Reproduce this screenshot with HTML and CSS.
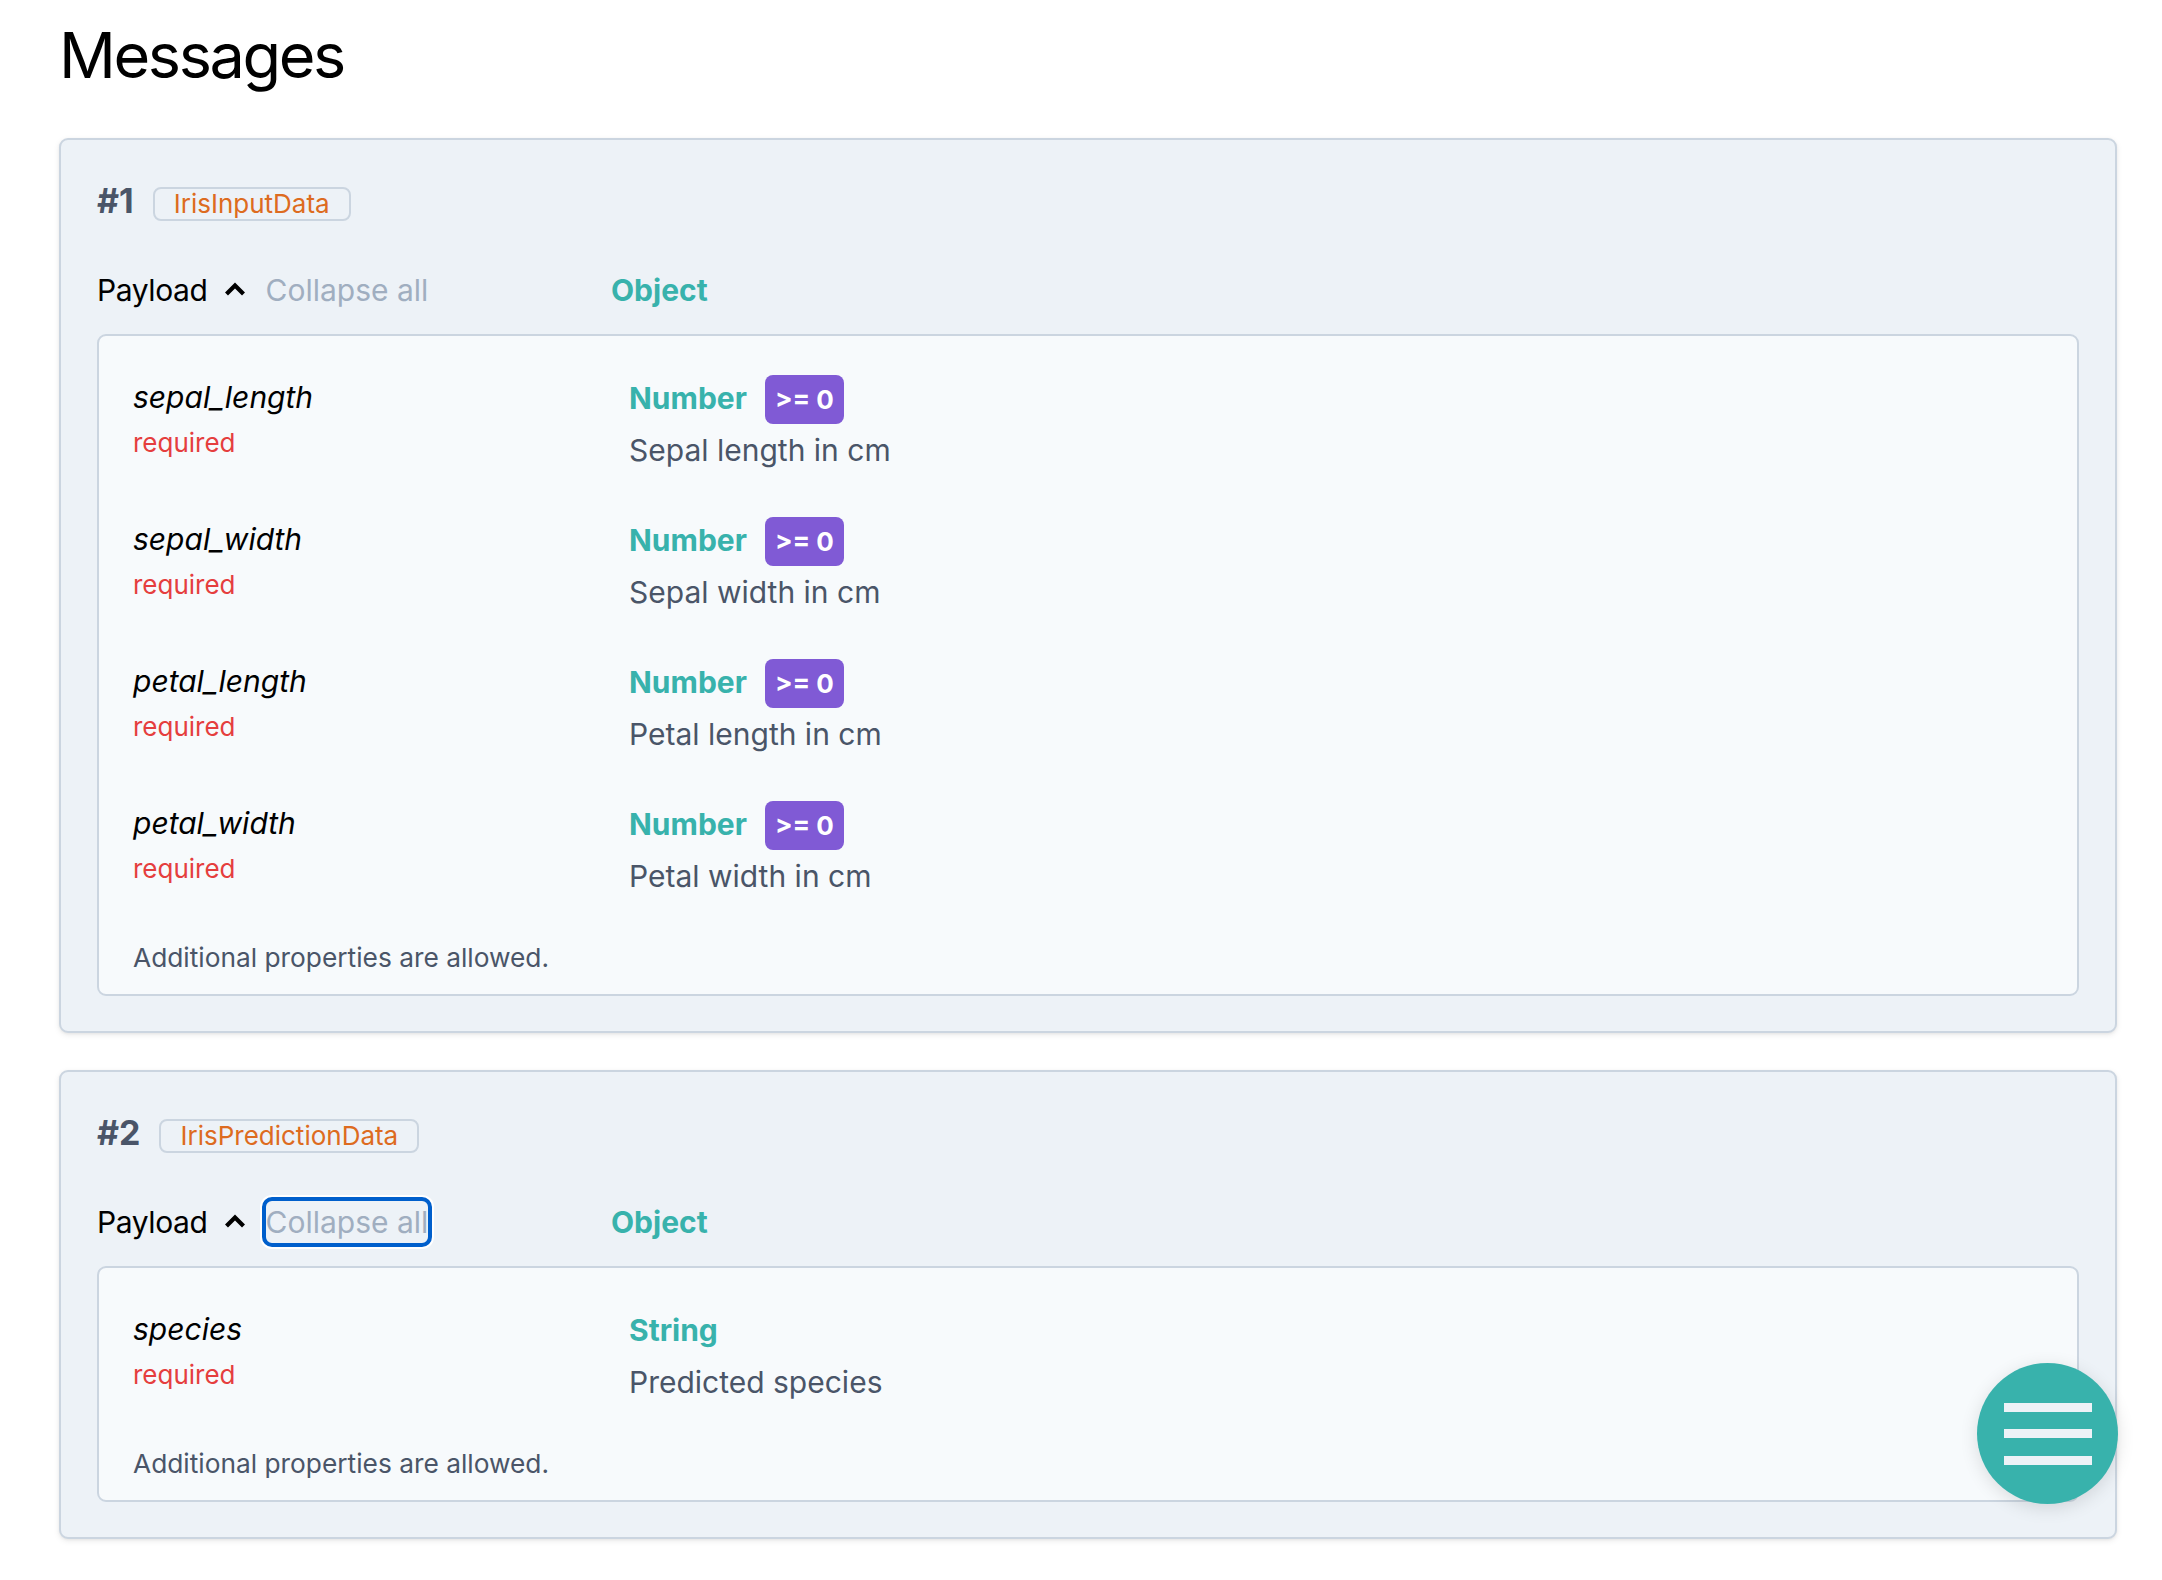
FILE: index.html
```html
<!DOCTYPE html>
<html lang="en">
<head>
<meta charset="utf-8">
<title>Messages</title>
<link rel="stylesheet" href="styles.css">
</head>
<body>
<main class="page">
  <h2 class="title">Messages</h2>

  <section class="card">
    <div class="msg-head">
      <span class="msg-num">#1</span>
      <span class="msg-name">IrisInputData</span>
    </div>
    <div class="payload-row">
      <div class="payload-left">
        <span class="payload-label">Payload</span>
        <svg class="chev" width="22" height="14" viewBox="0 0 22 14" aria-hidden="true"><polyline points="2.5,12 11,3.5 19.5,12" fill="none" stroke="#000" stroke-width="4.2" stroke-linecap="butt" stroke-linejoin="miter"/></svg>
        <button class="collapse" type="button">Collapse all</button>
      </div>
      <span class="type">Object</span>
    </div>
    <div class="schema">
      <div class="props">
        <div class="prop">
          <div class="prop-name"><div class="name">sepal_length</div><div class="req">required</div></div>
          <div class="prop-info"><div class="type-line"><span class="type">Number</span><span class="constraint">&gt;= 0</span></div><div class="desc">Sepal length in cm</div></div>
        </div>
        <div class="prop">
          <div class="prop-name"><div class="name">sepal_width</div><div class="req">required</div></div>
          <div class="prop-info"><div class="type-line"><span class="type">Number</span><span class="constraint">&gt;= 0</span></div><div class="desc">Sepal width in cm</div></div>
        </div>
        <div class="prop">
          <div class="prop-name"><div class="name">petal_length</div><div class="req">required</div></div>
          <div class="prop-info"><div class="type-line"><span class="type">Number</span><span class="constraint">&gt;= 0</span></div><div class="desc">Petal length in cm</div></div>
        </div>
        <div class="prop">
          <div class="prop-name"><div class="name">petal_width</div><div class="req">required</div></div>
          <div class="prop-info"><div class="type-line"><span class="type">Number</span><span class="constraint">&gt;= 0</span></div><div class="desc">Petal width in cm</div></div>
        </div>
      </div>
      <p class="additional">Additional properties are allowed.</p>
    </div>
  </section>

  <section class="card">
    <div class="msg-head">
      <span class="msg-num">#2</span>
      <span class="msg-name">IrisPredictionData</span>
    </div>
    <div class="payload-row">
      <div class="payload-left">
        <span class="payload-label">Payload</span>
        <svg class="chev" width="22" height="14" viewBox="0 0 22 14" aria-hidden="true"><polyline points="2.5,12 11,3.5 19.5,12" fill="none" stroke="#000" stroke-width="4.2" stroke-linecap="butt" stroke-linejoin="miter"/></svg>
        <button class="collapse focused" type="button">Collapse all</button>
      </div>
      <span class="type">Object</span>
    </div>
    <div class="schema">
      <div class="props">
        <div class="prop">
          <div class="prop-name"><div class="name">species</div><div class="req">required</div></div>
          <div class="prop-info"><div class="type-line"><span class="type">String</span></div><div class="desc">Predicted species</div></div>
        </div>
      </div>
      <p class="additional">Additional properties are allowed.</p>
    </div>
  </section>
</main>

<button class="fab" type="button" aria-label="Menu">
  <span class="bar"></span><span class="bar"></span><span class="bar"></span>
</button>
</body>
</html>
```

FILE: styles.css
```css
* { box-sizing: border-box; }

html, body {
  margin: 0;
  padding: 0;
  background: #ffffff;
  font-family: Inter, "Liberation Sans", "Noto Sans", sans-serif;
  color: #000;
}

.page {
  padding: 17px 45px 0 59px;
}

.title {
  margin: 0 0 45px;
  font-size: 63px;
  line-height: 76px;
  font-weight: 400;
  letter-spacing: -2.4px;
  color: #000;
}

.card {
  background: #edf2f7;
  border: 2px solid #cbd5e0;
  border-radius: 9px;
  padding: 44px 36px 35px;
  margin-bottom: 37px;
  box-shadow: 0 2px 6px rgba(0, 0, 0, 0.08), 0 1px 3px rgba(0, 0, 0, 0.05);
}

.msg-head {
  display: flex;
  align-items: baseline;
}

.msg-num {
  font-size: 34px;
  line-height: 34px;
  font-weight: 700;
  color: #4a5568;
}

.msg-name {
  margin-left: 19px;
  border: 2px solid #cbd5e0;
  border-radius: 8px;
  padding: 0 19px;
  font-size: 26px;
  line-height: 30px;
  color: #dd6b20;
}

.payload-row {
  display: flex;
  align-items: baseline;
  margin-top: 48px;
  line-height: 42px;
  font-size: 30px;
}

.payload-left {
  width: 514px;
  flex: none;
  display: flex;
  align-items: center;
}

.payload-label {
  color: #000;
  letter-spacing: -0.4px;
}

.chev {
  display: block;
  margin-left: 16px;
  margin-top: -2px;
}

.collapse {
  margin-left: 20px;
  padding: 0;
  border: 0;
  background: transparent;
  font: inherit;
  font-size: 30px;
  line-height: 42px;
  color: #a0aec0;
  border-radius: 6px;
  cursor: pointer;
}

.collapse.focused {
  outline: 4px solid #005fcc;
  outline-offset: 0;
  box-shadow: 0 0 0 6px #ffffff;
}

.type {
  font-size: 30px;
  font-weight: 700;
  color: #38b2ac;
  line-height: 46px;
}

.payload-row .type {
  line-height: 42px;
}

.schema {
  margin-top: 23px;
  background: #f7fafc;
  border: 2px solid #cbd5e0;
  border-radius: 9px;
  padding: 39px 34px 18.5px;
}

.props {
  display: flex;
  flex-direction: column;
  gap: 46px;
}

.prop {
  display: flex;
}

.prop-name {
  width: 496px;
  flex: none;
}

.name {
  font-size: 30px;
  line-height: 44px;
  font-style: italic;
  color: #000;
}

.req {
  margin-top: 5.5px;
  font-size: 26px;
  line-height: 36px;
  color: #e53e3e;
}

.prop-info {
  flex: 1;
}

.type-line {
  display: flex;
  align-items: baseline;
  min-height: 49px;
}

.constraint {
  margin-left: 18px;
  background: #805ad5;
  color: #ffffff;
  font-weight: 700;
  font-size: 26px;
  line-height: 37px;
  padding: 6px 10px;
  border-radius: 8px;
}

.desc {
  margin-top: 6px;
  font-size: 30px;
  line-height: 41px;
  color: #4a5568;
}

.additional {
  margin: 42.5px 0 0;
  font-size: 26.3px;
  line-height: 36px;
  color: #4a5568;
}

.fab {
  position: fixed;
  right: 44px;
  bottom: 76px;
  width: 141px;
  height: 141px;
  border-radius: 50%;
  border: 0;
  padding: 0;
  background: #38b2ac;
  box-shadow: 0 4px 18px rgba(0, 0, 0, 0.12);
  display: flex;
  flex-direction: column;
  align-items: center;
  justify-content: center;
  gap: 17.5px;
  cursor: pointer;
}

.fab .bar {
  display: block;
  width: 88px;
  height: 9px;
  background: #edf2f7;
}
```
